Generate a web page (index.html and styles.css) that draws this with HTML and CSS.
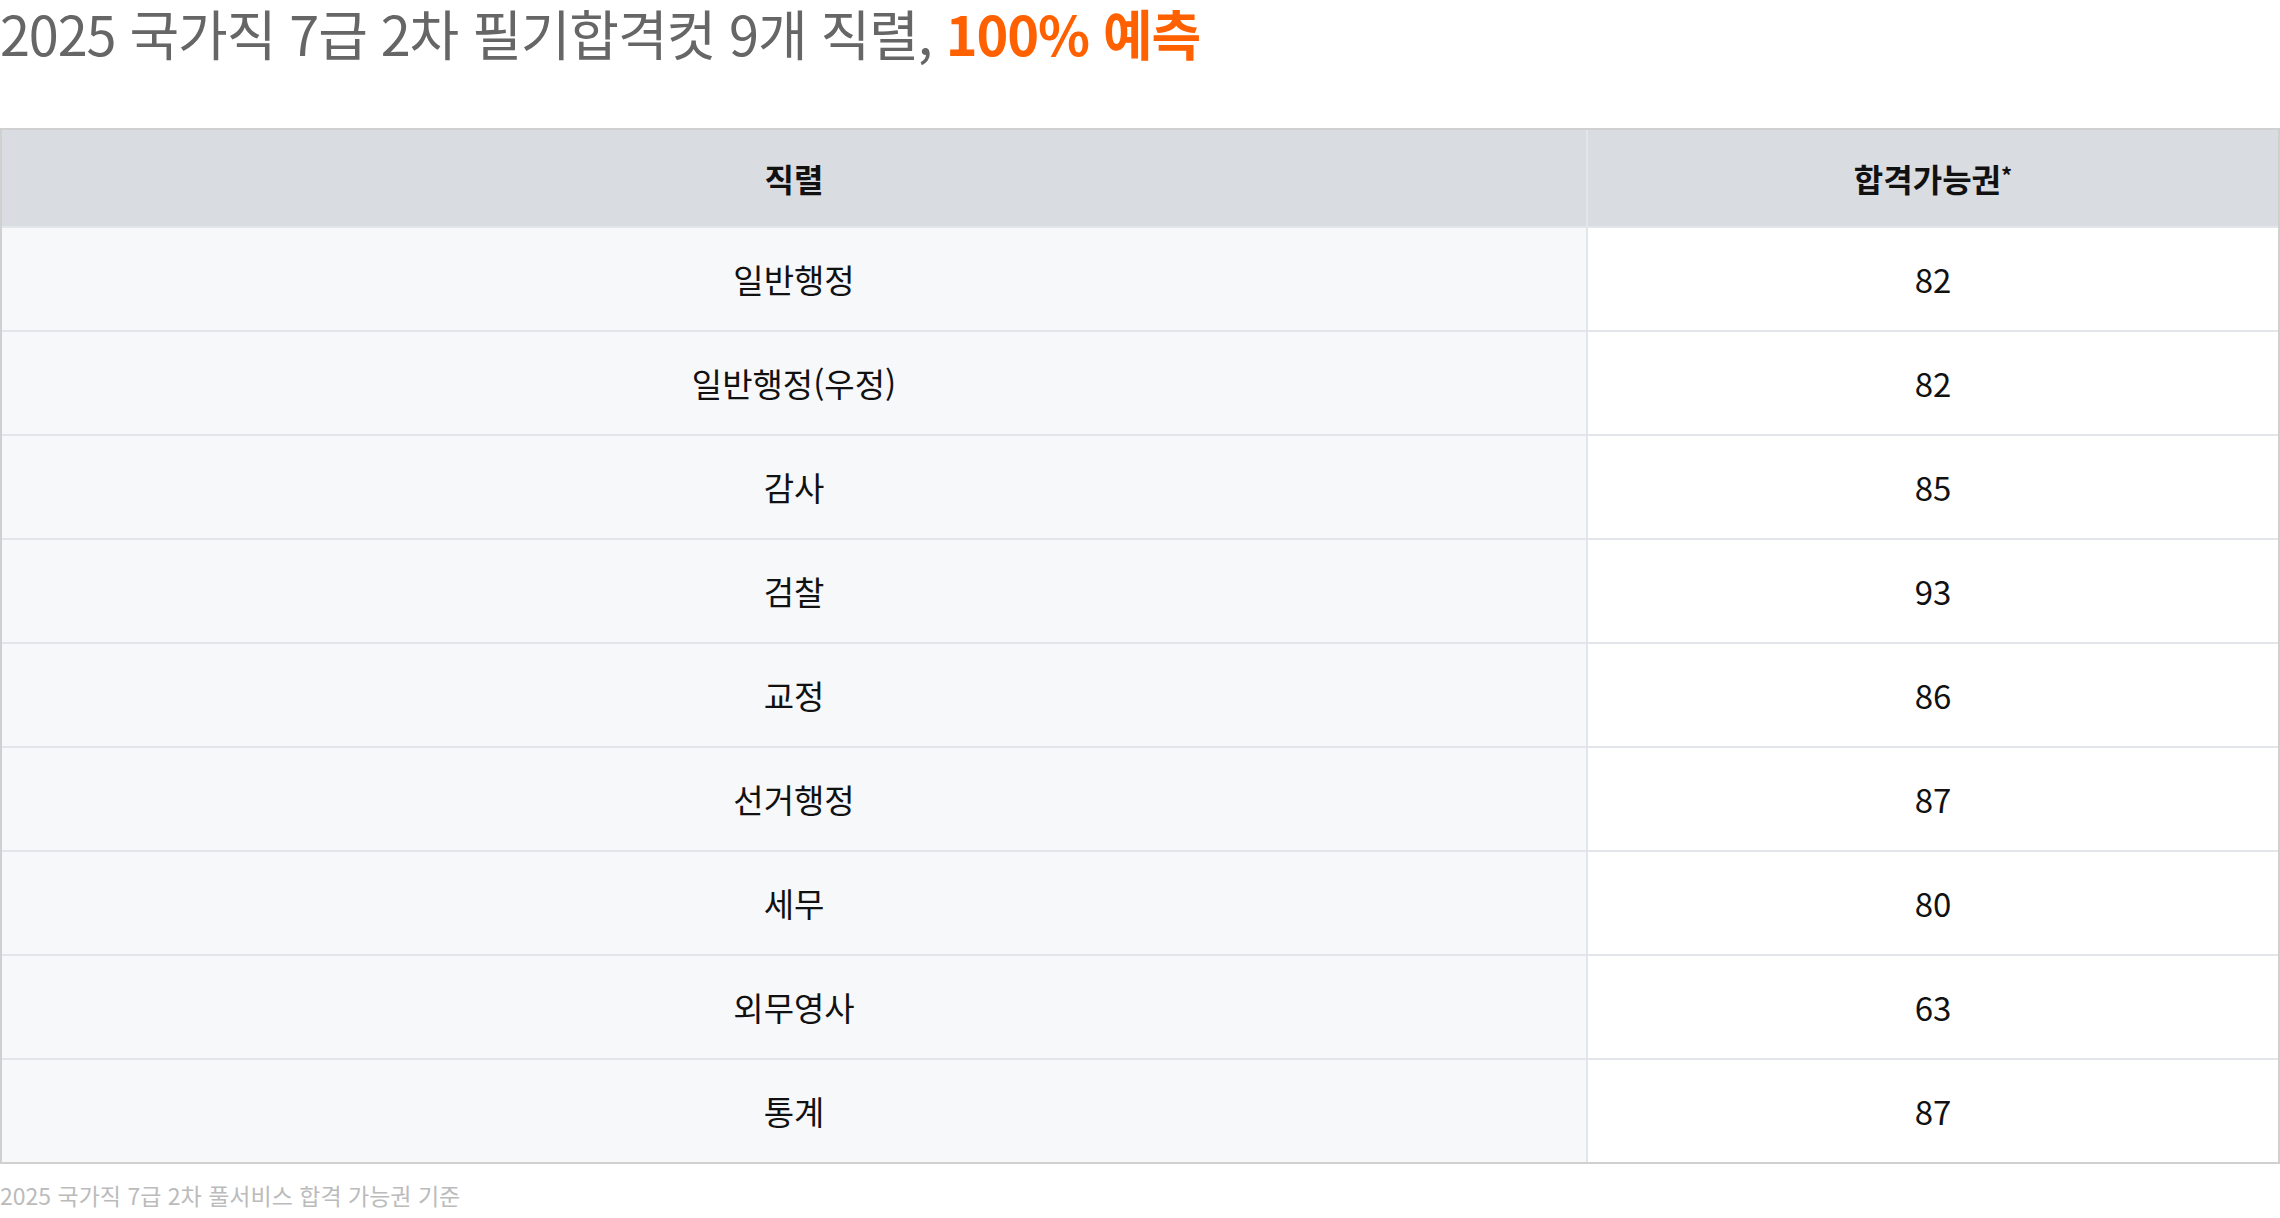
FILE: index.html
```
<!DOCTYPE html>
<html lang="ko">
  <head>
    <meta charset="UTF-8" />
    <meta name="viewport" content="width=device-width, initial-scale=1.0" />
    <title>2025 국가직 7급 2차 필기합격컷</title>
    <link rel="stylesheet" href="styles.css">
  </head>
  <body>
    <h1 class="title">
      2025 국가직 7급 2차 필기합격컷 9개 직렬, <strong>100% 예측</strong>
    </h1>

    <table class="cut-table">
      <colgroup>
        <col class="col-name" />
        <col class="col-score" />
      </colgroup>
      <thead>
        <tr>
          <th>직렬</th>
          <th>합격가능권<sup>*</sup></th>
        </tr>
      </thead>
      <tbody>
        <tr><td>일반행정</td><td>82</td></tr>
        <tr><td>일반행정(우정)</td><td>82</td></tr>
        <tr><td>감사</td><td>85</td></tr>
        <tr><td>검찰</td><td>93</td></tr>
        <tr><td>교정</td><td>86</td></tr>
        <tr><td>선거행정</td><td>87</td></tr>
        <tr><td>세무</td><td>80</td></tr>
        <tr><td>외무영사</td><td>63</td></tr>
        <tr><td>통계</td><td>87</td></tr>
      </tbody>
    </table>

    <p class="note">2025 국가직 7급 2차 풀서비스 합격 가능권 기준</p>
  </body>
</html>
```

FILE: styles.css
```
body {
  margin: 0;
  font-family: "Noto Sans CJK KR", "Noto Sans", sans-serif;
  color: #111;
  background: #fff;
}
.title {
  margin: 0;
  height: 128px;
  font-size: 54px;
  font-weight: 400;
  line-height: 66px;
  color: #666;
  letter-spacing: -1.1px;
}
.title strong {
  color: #ff6000;
  font-weight: 700;
}
.cut-table {
  width: 100%;
  border-collapse: separate;
  border-spacing: 0;
  border: 2px solid #d0d0d0;
  table-layout: fixed;
}
.col-name {
  width: 1586px;
}
.cut-table th,
.cut-table td {
  padding: 0;
  text-align: center;
  border-bottom: 2px solid #e2e5ea;
  border-right: 2px solid #e2e5ea;
}
.cut-table th:last-child,
.cut-table td:last-child {
  border-right: none;
}
.cut-table tbody tr:last-child td {
  border-bottom: none;
}
.cut-table th {
  height: 96px;
  background: #d9dce1;
  font-size: 32px;
  font-weight: 700;
  color: #111;
}
.cut-table th sup {
  font-size: 22px;
  font-weight: 700;
  vertical-align: 8px;
}
.cut-table td {
  height: 102px;
  font-size: 33px;
  color: #111;
}
.cut-table td:first-child {
  background: #f7f8fa;
}
.note {
  margin: 14px 0 0;
  font-size: 23px;
  color: #bbb;
  letter-spacing: 0;
}
```
